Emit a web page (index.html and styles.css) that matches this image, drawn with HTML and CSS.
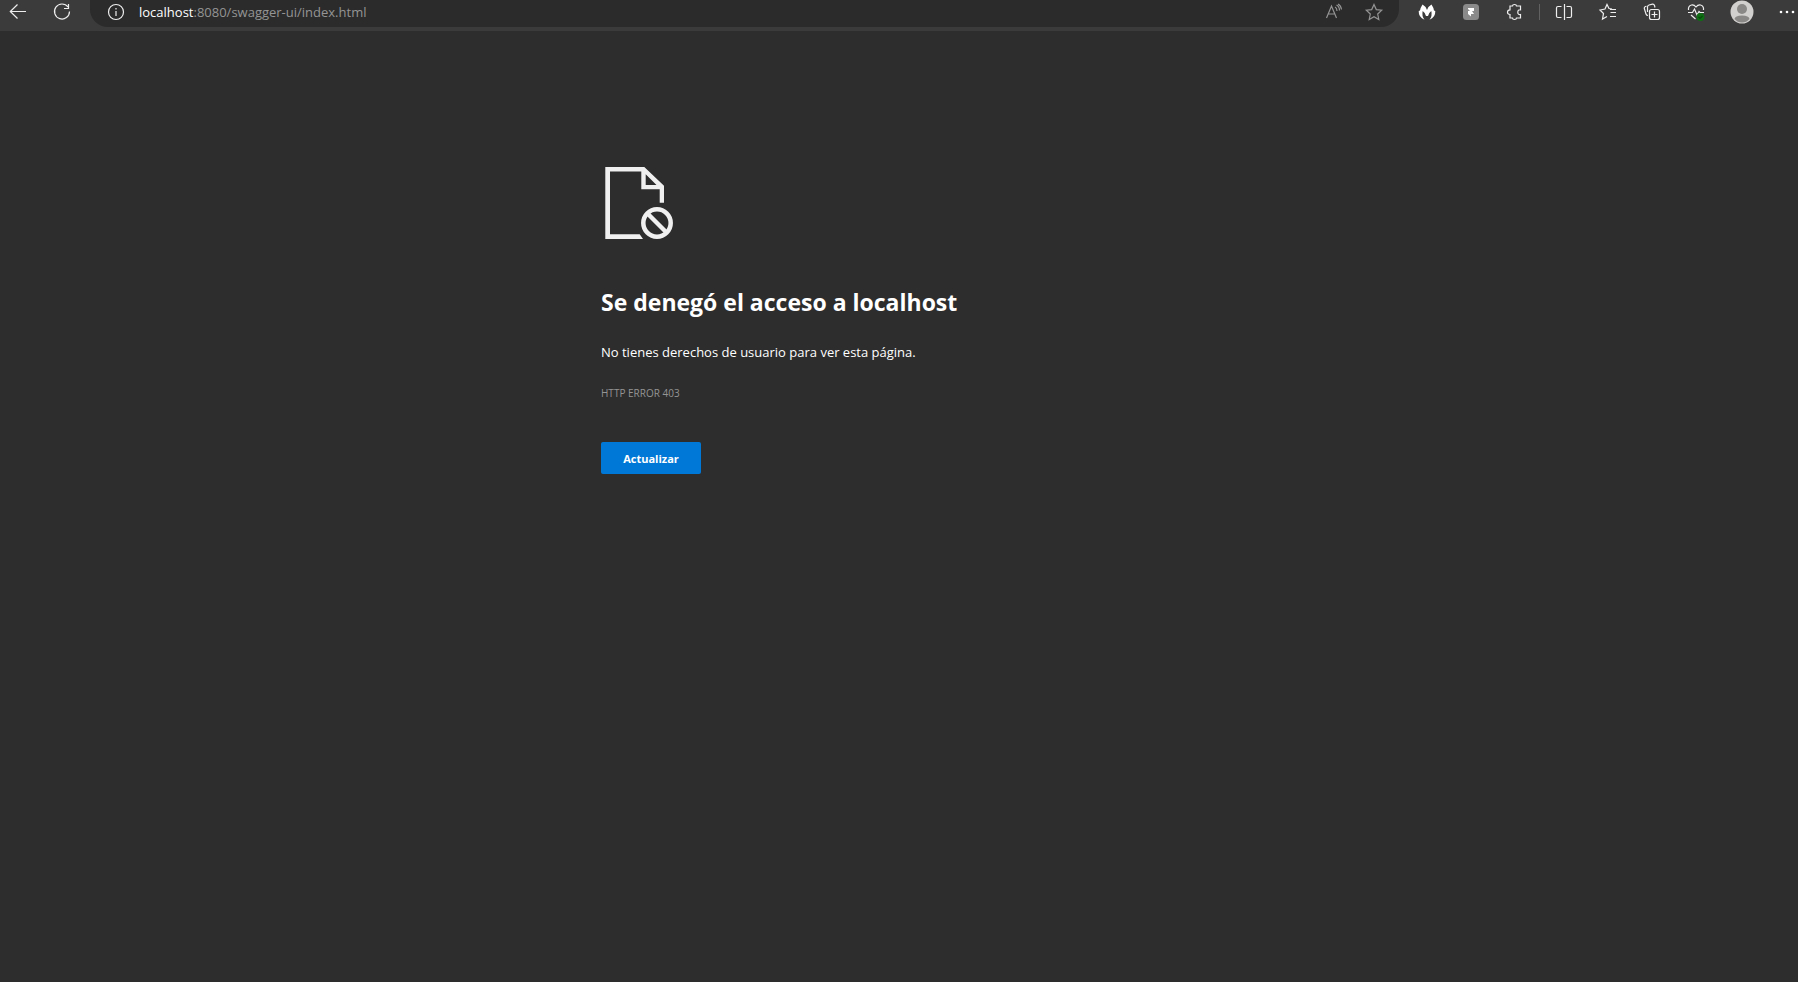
FILE: index.html
```html
<!DOCTYPE html>
<html lang="es">
<head>
<meta charset="utf-8">
<title>localhost</title>
<link rel="stylesheet" href="styles.css">
</head>
<body>
<header class="toolbar">
  <nav class="group nav">
    <button class="tool" aria-label="Atrás"><svg class="icon" viewBox="0 0 24 24"><path d="M4 11.500H20M11.500 4.500L4.300 11.500L11.500 18.500"/></svg></button>
    <button class="tool" aria-label="Recargar"><svg class="icon" viewBox="0 0 24 24"><path d="M18 7A7.500 7.500 0 1 0 19.500 11.500M18.500 4V8.500H14"/></svg></button>
  </nav>
  <div class="address">
    <button class="tool info" aria-label="Información del sitio"><svg class="icon" viewBox="0 0 24 24"><circle cx="12" cy="12" r="7.500"/><path d="M12 11V16M12 8V9.500"/></svg></button>
    <a class="url" href="#"><span class="host">localhost</span>:8080/swagger-ui/index.html</a>
    <button class="tool dim" aria-label="Leer en voz alta"><svg class="icon" viewBox="0 0 24 24"><path d="M4.500 18L9.500 6L14.500 18M6.300 14H12.700M13 7Q15 8 15 11M14.500 5Q17.500 6.500 17.500 10.500M16 4Q19 5.500 19.500 9.500"/></svg></button>
    <button class="tool dim" aria-label="Añadir a favoritos"><svg class="icon" viewBox="0 0 24 24"><path d="M12 4.500L14.300 9.600L19.700 10.200L15.700 14L16.800 19.500L12 16.800L7.200 19.500L8.300 14L4.300 10.200L9.700 9.600Z"/></svg></button>
  </div>
  <div class="group">
    <button class="tool" aria-label="Malwarebytes"><svg class="icon" viewBox="0 0 24 24"><path class="solid" d="M7.500 4.500Q10.500 6 12 10Q13.500 6 16.500 4.500Q18.500 7.500 19 10.500L20.300 11Q20.500 17.500 14.500 19.700Q17.500 16 16.300 11Q14 12.500 13 16H11Q10 12.500 7.700 11Q6.500 16 9.500 19.700Q3.500 17.500 3.700 11L5 10.500Q5.500 7.500 7.500 4.500Z"/></svg></button>
    <button class="tool" aria-label="Extensión"><svg class="icon" viewBox="0 0 24 24"><rect class="tile" x="4" y="4" width="16" height="16" rx="3.500"/><path class="solid" d="M9 8H15V11H13L15 14H12V16.500L9 14V11H11L9 9Z"/></svg></button>
    <button class="tool" aria-label="Extensiones"><svg class="icon" viewBox="0 0 24 24"><path d="M7 6H9.500Q9.500 4.500 11.500 4.500T13.500 6H17.500V9.800Q14.800 9.500 14.800 12.200T17.500 14.500V18H13.500Q13.500 19.500 11.500 19.500T9.500 18H7V14.500Q4.500 14.500 4.500 12.200T7 9.800Z"/></svg></button>
  </div>
  <span class="separator"></span>
  <div class="group">
    <button class="tool" aria-label="Pantalla dividida"><svg class="icon" viewBox="0 0 24 24"><path d="M9.500 6.500H6Q4.500 6.500 4.500 8V16Q4.500 17.500 6 17.500H9.500M14.500 6.500H18Q19.500 6.500 19.500 8V16Q19.500 17.500 18 17.500H14.500M12.500 4V20"/></svg></button>
    <button class="tool" aria-label="Favoritos"><svg class="icon" viewBox="0 0 24 24"><path d="M16 9L13 8.500L11 4.500L9 9L4 10L7.500 13.500L6.500 19L11 16.500M14 9.500H20M14.500 12.500H20M14 16.500H20"/></svg></button>
    <button class="tool" aria-label="Colecciones"><svg class="icon" viewBox="0 0 24 24"><path d="M8 15.500Q6.500 15.500 6 14L4.300 8.500Q4 7 5.500 6.500L6.500 6.200M7.500 12V7Q7.500 5.500 9 5L12.500 4.200Q14 4 14.500 5.500L15 7.500"/><rect x="9.500" y="9.500" width="10" height="10" rx="2"/><path d="M14.500 11.500V17.500M11.500 14.500H17.500"/></svg></button>
    <button class="tool" aria-label="Rendimiento"><svg class="icon" viewBox="0 0 24 24"><path d="M4.500 10Q4 6 7.500 5Q10 4.500 12 7Q14 4.500 16.500 5Q20 6 19.500 10M4 12.500H8.500L10.500 9L13 15L15 11.500L16 12.500H20M7 15L11.500 19"/><circle class="ok" cx="16.500" cy="17" r="4"/><path class="tick" d="M14.500 17L16 18.500L18.500 16"/></svg></button>
    <button class="tool profile" aria-label="Perfil"><svg class="avatar" viewBox="0 0 24 24"><circle class="face" cx="12" cy="12" r="11.500"/><circle class="person" cx="12" cy="9" r="5"/><path class="person" d="M4.500 19Q5 15.500 12 15.500T19.500 19Q16.500 22.500 12 22.500T4.500 19Z"/></svg></button>
    <button class="tool more" aria-label="Más"><svg class="icon" viewBox="0 0 24 24"><circle class="solid" cx="6" cy="12" r="1.300"/><circle class="solid" cx="12" cy="12" r="1.300"/><circle class="solid" cx="18" cy="12" r="1.300"/></svg></button>
  </div>
</header>
<main class="error">
  <svg class="picture" viewBox="0 0 76 80"><path class="sheet" d="M4.300 5H43.300L63 23.700V40.700H58.700V27.300H40.300V9.500H9V72.300H38.700L42 77H4.300ZM44.700 12.300V23H55.500Z"/><circle class="ban" cx="56" cy="61" r="13.700"/><path class="ban" d="M46.500 51.500L65.500 70.500"/></svg>
  <h1 class="title">Se denegó el acceso a localhost</h1>
  <p class="message">No tienes derechos de usuario para ver esta página.</p>
  <p class="code">HTTP ERROR 403</p>
  <button class="reload">Actualizar</button>
</main>
</body>
</html>
```
FILE: styles.css
```css
* { box-sizing: border-box; }
body {
  margin: 0;
  min-height: 100vh;
  background: #2d2d2d;
  color: #fff;
  font-family: "Open Sans", "Noto Sans", sans-serif;
}
button { border: 0; padding: 0; background: none; color: inherit; font: inherit; }
.toolbar {
  display: flex;
  height: 31px;
  padding-bottom: 4px;
  background: #3b3b3b;
}
.group { display: flex; gap: 8px; }
.nav { margin-right: 10px; }
.tool {
  display: flex;
  flex: none;
  justify-content: center;
  width: 36px;
  height: 24px;
}
.icon {
  flex: none;
  width: 24px;
  height: 24px;
  fill: none;
  stroke: #eee;
  stroke-width: 1.2;
}
.address {
  display: flex;
  flex: 1;
  gap: 4px;
  margin-right: 10px;
  padding: 0 7px 0 8px;
  border-radius: 0 0 18px 18px;
  background: #2b2b2b;
}
.url {
  flex: 1;
  padding-left: 1px;
  color: #949494;
  font-size: 13px;
  line-height: 24px;
  text-decoration: none;
}
.host { color: #fff; }
.dim .icon { stroke: #949494; }
.icon .solid { fill: #fff; stroke: none; }
.icon .tile { fill: #8a8a8a; stroke: none; }
.icon .ok { fill: #0f6e14; stroke: none; }
.icon .tick { stroke: #0a4a0d; }
.separator { width: 1px; height: 16px; margin: 4px 6px; background: #616161; }
.avatar { flex: none; width: 24px; height: 24px; }
.face { fill: #d2d0ce; }
.person { fill: #8a8886; }
.profile { width: 40px; }
.more { width: 28px; padding-left: 6px; }
.error {
  max-width: 596px;
  margin: 0 auto;
  padding-top: 131px;
}
.picture { display: block; width: 76px; height: 80px; }
.sheet { fill: #f0f0f0; fill-rule: evenodd; }
.ban { fill: none; stroke: #f0f0f0; stroke-width: 4.5; }
.title { margin: 44px 0 0; font-size: 23px; line-height: 32px; font-weight: 700; }
.message { margin: 24px 0 0; font-size: 13px; line-height: 20px; }
.code { margin: 20px 0 0; color: #949494; font-size: 10px; font-weight: 500; line-height: 22px; }
.reload {
  width: 100px;
  height: 32px;
  margin-top: 38px;
  padding-top: 1px;
  border-radius: 2px;
  background: #0078d7;
  font-size: 11px;
  font-weight: 700;
}
```
